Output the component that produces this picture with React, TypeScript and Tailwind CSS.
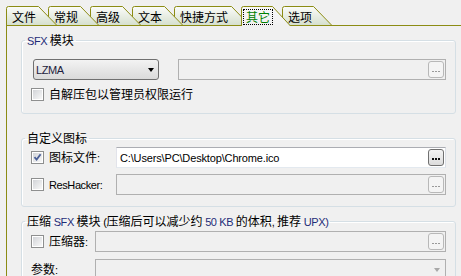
import type { ReactNode } from 'react'

const OLIVE = '#8c8c14'

type TabDef = { label: string; w: number; cls: string; sel?: boolean }

const tabs: TabDef[] = [
  { label: '文件', w: 51, cls: 'w-[51px] z-[7]' },
  { label: '常规', w: 51, cls: 'w-[51px] z-[6]' },
  { label: '高级', w: 51, cls: 'w-[51px] z-[5]' },
  { label: '文本', w: 51, cls: 'w-[51px] z-[4]' },
  { label: '快捷方式', w: 76, cls: 'w-[76px] z-[3]' },
  { label: '其它', w: 50, cls: 'w-[50px] z-[10] h-[20px] -mb-px', sel: true },
  { label: '选项', w: 50, cls: 'w-[50px] z-[1]' },
]

const Tab = ({ t }: { t: TabDef }) => {
  const h = t.sel ? 20 : 19
  const d = `M0.5 ${h} V2.5 Q0.5 0.5 2.5 0.5 H${t.w - 18.5} L${t.w - 0.5} ${h}`
  return (
    <div className={`relative -mr-[9px] h-[19px] shrink-0 ${t.cls}`}>
      <svg className="absolute inset-0" width={t.w} height={h}>
        <defs>
          <linearGradient id="tabg" x1="0" y1="0" x2="0" y2="1">
            <stop offset="0" stopColor="#fbfcfa" />
            <stop offset="1" stopColor="#d6e0cf" />
          </linearGradient>
          <linearGradient id="tabs" x1="0" y1="0" x2="0" y2="1">
            <stop offset="0" stopColor="#f8f8f8" />
            <stop offset="1" stopColor="#f0f0f0" />
          </linearGradient>
        </defs>
        <path d={d + ' Z'} fill={t.sel ? 'url(#tabs)' : 'url(#tabg)'} stroke="none" />
        <path d={d} fill="none" stroke={OLIVE} strokeWidth="1" />
      </svg>
      <div className="relative pl-[6px] pt-[3px] leading-[16px] text-[12px]">
        {t.sel ? (
          <span className="inline-block text-[#008000] outline outline-1 outline-dotted outline-black -ml-[3px] px-[2px] leading-[14px]">
            {t.label}
          </span>
        ) : (
          <span className="text-black">{t.label}</span>
        )}
      </div>
    </div>
  )
}

const Dots = ({ on }: { on?: boolean }) => (
  <div className="flex gap-[1px] pt-[3px]">
    {[0, 1, 2].map((i) => (
      <span key={i} className={on ? 'block w-[2px] h-[2px] bg-[#111]' : 'block w-[2px] h-px bg-[#9a9a9a]'} />
    ))}
  </div>
)

const Browse = ({ on }: { on?: boolean }) => (
  <div
    className={
      on
        ? 'w-[16px] h-[17px] rounded-[3px] border border-[#707070] bg-gradient-to-b from-[#f4f4f4] to-[#dcdcdc] flex items-center justify-center'
        : 'w-[16px] h-[17px] rounded-[3px] border border-[#b8b8b8] bg-[#f4f4f4] flex items-center justify-center'
    }
  >
    <Dots on={on} />
  </div>
)

const Check = ({ on }: { on?: boolean }) => (
  <div className="w-[13px] h-[13px] border border-[#8e8f8f] bg-white p-[1px] shrink-0">
    <div className="relative w-full h-full bg-gradient-to-br from-[#d2d4d8] to-[#f8f8f8]">
      {on && (
        <svg className="absolute -left-[1px] -top-[1px]" width="11" height="11" viewBox="0 0 11 11">
          <path d="M2.5 5.2 L4.6 7.6 L8.6 2.2" fill="none" stroke="#4a5f97" strokeWidth="1.8" />
        </svg>
      )}
    </div>
  </div>
)

const Group = ({ title, cls, children }: { title: ReactNode; cls: string; children: ReactNode }) => (
  <fieldset className={`w-[435px] border border-[#d5dfe5] rounded-[3px] shadow-[inset_1px_1px_0_#fff] pl-[9px] pr-[9px] ${cls}`}>
    <legend className="-ml-[6px] px-[2px] leading-[16px] text-[12px] text-black">{title}</legend>
    {children}
  </fieldset>
)

// latin bits are rendered narrower, like the Tahoma of the original dialog
const Lat = ({ children, blue }: { children: ReactNode; blue?: boolean }) => (
  <span className={`font-['Liberation_Sans',sans-serif] text-[11px] tracking-[-0.4px] ${blue ? 'text-[#1f2d78]' : ''}`}>
    {children}
  </span>
)

export default function App() {
  return (
    <div className="w-[461px] h-[276px] overflow-hidden bg-[#f0f0f0] pt-[6px] pl-[6px] font-['Noto_Sans_CJK_SC',sans-serif] text-[12px] text-black">
      <div className="flex items-end h-[19px]">
        {tabs.map((t) => (
          <Tab key={t.label} t={t} />
        ))}
      </div>
      <div className="border-l border-t border-[#8c8c14] h-[260px] pl-[14px] pt-[6px]">
        <Group title={<>
          <Lat blue>SFX </Lat>模块
        </>} cls="pb-[12px]">
          <div className="flex justify-between items-start mt-[10px]">
            <div className="ml-[2px] w-[126px] h-[21px] rounded-[3px] border border-[#707070] bg-gradient-to-b from-[#f3f3f3] to-[#dadada] flex items-center justify-between pl-[2px] pr-[4px]">
              <span className="leading-[14px] text-[#1c1c3c]">
                <Lat>LZMA</Lat>
              </span>
              <span className="block w-0 h-0 border-l-[3.5px] border-r-[3.5px] border-t-[4px] border-l-transparent border-r-transparent border-t-black mt-[1px]" />
            </div>
            <div className="w-[268px] h-[21px] border border-[#b0b0b0] bg-[#f0f0f0] flex items-center justify-end pr-px">
              <Browse />
            </div>
          </div>
          <div className="flex items-center mt-[7px] h-[14px]">
            <Check />
            <span className="ml-[5px] leading-[14px]">自解压包以管理员权限运行</span>
          </div>
        </Group>

        <Group title="自定义图标" cls="mt-[16px] pb-[11px]">
          <div className="flex items-center mt-px">
            <div className="w-[85px] flex items-center">
              <Check on />
              <span className="ml-[5px]">图标文件<Lat>:</Lat></span>
            </div>
            <div className="w-[330px] h-[21px] border border-[#abadb3] border-l-[#e2e3ea] border-r-[#dbdfe6] border-b-[#e3e9ef] bg-white flex items-center justify-between pl-[3px] pr-px">
              <span className="leading-[14px] font-['Liberation_Sans',sans-serif] text-[11px] tracking-[-0.15px]">C:\Users\PC\Desktop\Chrome.ico</span>
              <Browse on />
            </div>
          </div>
          <div className="flex items-center mt-[6px]">
            <div className="w-[85px] flex items-center">
              <Check />
              <span className="ml-[5px]">
                <Lat>ResHacker:</Lat>
              </span>
            </div>
            <div className="w-[330px] h-[21px] border border-[#b0b0b0] bg-[#f0f0f0] flex items-center justify-end pr-px">
              <Browse />
            </div>
          </div>
        </Group>

        <Group
          title={<>
            压缩<Lat blue> SFX </Lat>模块<Lat> (</Lat>压缩后可以减少约<Lat blue> 50 KB </Lat>的体积<Lat>, </Lat>推荐<Lat blue> UPX)</Lat>
          </>}
          cls="mt-[6px] pb-[4px]"
        >
          <div className="flex items-center mt-px">
            <div className="w-[64px] flex items-center">
              <Check />
              <span className="ml-[5px]">压缩器<Lat>:</Lat></span>
            </div>
            <div className="w-[351px] h-[21px] border border-[#b0b0b0] bg-[#f0f0f0] flex items-center justify-end pr-px">
              <Browse />
            </div>
          </div>
          <div className="flex items-center mt-[7px]">
            <div className="w-[64px]">参数<Lat>:</Lat></div>
            <div className="w-[351px] h-[21px] border border-[#b0b0b0] bg-[#f0f0f0] flex items-center justify-end pr-[5px]">
              <span className="block w-0 h-0 border-l-[3.5px] border-r-[3.5px] border-t-[4px] border-l-transparent border-r-transparent border-t-[#a8a8a8] mt-[1px]" />
            </div>
          </div>
        </Group>
      </div>
    </div>
  )
}
